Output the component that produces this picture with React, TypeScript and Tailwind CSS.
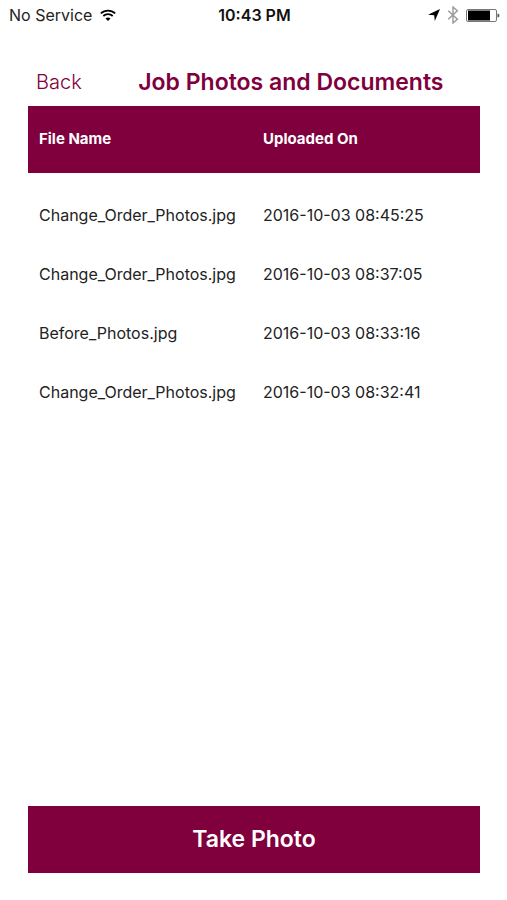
interface PhotoFile {
  name: string;
  uploadedOn: string;
}

interface IconProps {
  className?: string;
}

const files: PhotoFile[] = [
  { name: "Change_Order_Photos.jpg", uploadedOn: "2016-10-03 08:45:25" },
  { name: "Change_Order_Photos.jpg", uploadedOn: "2016-10-03 08:37:05" },
  { name: "Before_Photos.jpg", uploadedOn: "2016-10-03 08:33:16" },
  { name: "Change_Order_Photos.jpg", uploadedOn: "2016-10-03 08:32:41" },
];

function WifiIcon({ className }: IconProps) {
  return (
    <svg className={className} viewBox="0 0 16 12" fill="none" aria-hidden="true">
      <path d="M0.8 4.4C4.8 0.6 11.2 0.6 15.2 4.4" stroke="currentColor" strokeWidth="1.8" />
      <path d="M3.3 7C5.9 4.6 10.1 4.6 12.7 7" stroke="currentColor" strokeWidth="1.8" />
      <path d="M8 12L5.5 9.4C6.9 8.1 9.1 8.1 10.5 9.4Z" fill="currentColor" />
    </svg>
  );
}

function LocationIcon({ className }: IconProps) {
  return (
    <svg className={className} viewBox="0 0 12 12" fill="currentColor" aria-hidden="true">
      <path d="M12 0L6.8 12L6.2 6.2L0 5.8Z" />
    </svg>
  );
}

function BluetoothIcon({ className }: IconProps) {
  return (
    <svg className={className} viewBox="0 0 12 18" fill="none" aria-hidden="true">
      <path
        d="M1.2 4.8L10.4 13.2L6 17V1L10.4 4.8L1.2 13.2"
        stroke="currentColor"
        strokeWidth="1.4"
      />
    </svg>
  );
}

function BatteryIcon({ className }: IconProps) {
  return (
    <svg className={className} viewBox="0 0 34 13" aria-hidden="true">
      <rect x="0.5" y="0.5" width="30" height="12" rx="1.5" fill="none" stroke="#777" />
      <rect x="2" y="1.5" width="22" height="10" fill="#000" />
      <path d="M31.5 4.5C34 4.5 34 8.5 31.5 8.5Z" fill="#555" />
    </svg>
  );
}

function StatusBar() {
  return (
    <div className="grid grid-cols-3 items-center h-[30px] pl-[9px] pr-[7px] text-base text-[#222]">
      <div className="flex items-center gap-2">
        <span>No Service</span>
        <WifiIcon className="w-4 h-3 text-black" />
      </div>
      <span className="text-center font-semibold text-[#111]">10:43 PM</span>
      <div className="flex items-center justify-end">
        <LocationIcon className="w-3 h-3 mr-[7px] text-black" />
        <BluetoothIcon className="w-3 h-[18px] mr-[7px] text-[#999]" />
        <BatteryIcon className="w-[34px] h-[13px]" />
      </div>
    </div>
  );
}

export default function App() {
  return (
    <div className="min-h-screen flex flex-col bg-white font-['Inter',sans-serif]">
      <StatusBar />
      <header className="flex items-center h-12 mt-7 pl-9 pr-[27px] text-[#7f003d]">
        <a href="#" className="text-xl font-light">
          Back
        </a>
        <h1 className="flex-1 pl-5 text-center text-[23px] font-semibold whitespace-nowrap">
          Job Photos and Documents
        </h1>
      </header>
      <main className="flex-1 flex flex-col pl-7 pr-[27px] pb-[27px]">
        <table className="w-full table-fixed text-left text-base text-[#222]">
          <thead>
            <tr className="h-[67px] bg-[#7f003d] text-[15px] text-white">
              <th className="w-56 pl-[11px] font-bold">File Name</th>
              <th className="pl-[11px] font-bold">Uploaded On</th>
            </tr>
          </thead>
          <tbody className="before:block before:h-3">
            {files.map((file, index) => (
              <tr key={index} className="h-[59px]">
                <td className="pl-[11px]">{file.name}</td>
                <td className="pl-[11px]">{file.uploadedOn}</td>
              </tr>
            ))}
          </tbody>
        </table>
        <button
          type="button"
          className="w-full h-[67px] mt-auto bg-[#7f003d] text-[23px] font-semibold text-white"
        >
          Take Photo
        </button>
      </main>
    </div>
  );
}
